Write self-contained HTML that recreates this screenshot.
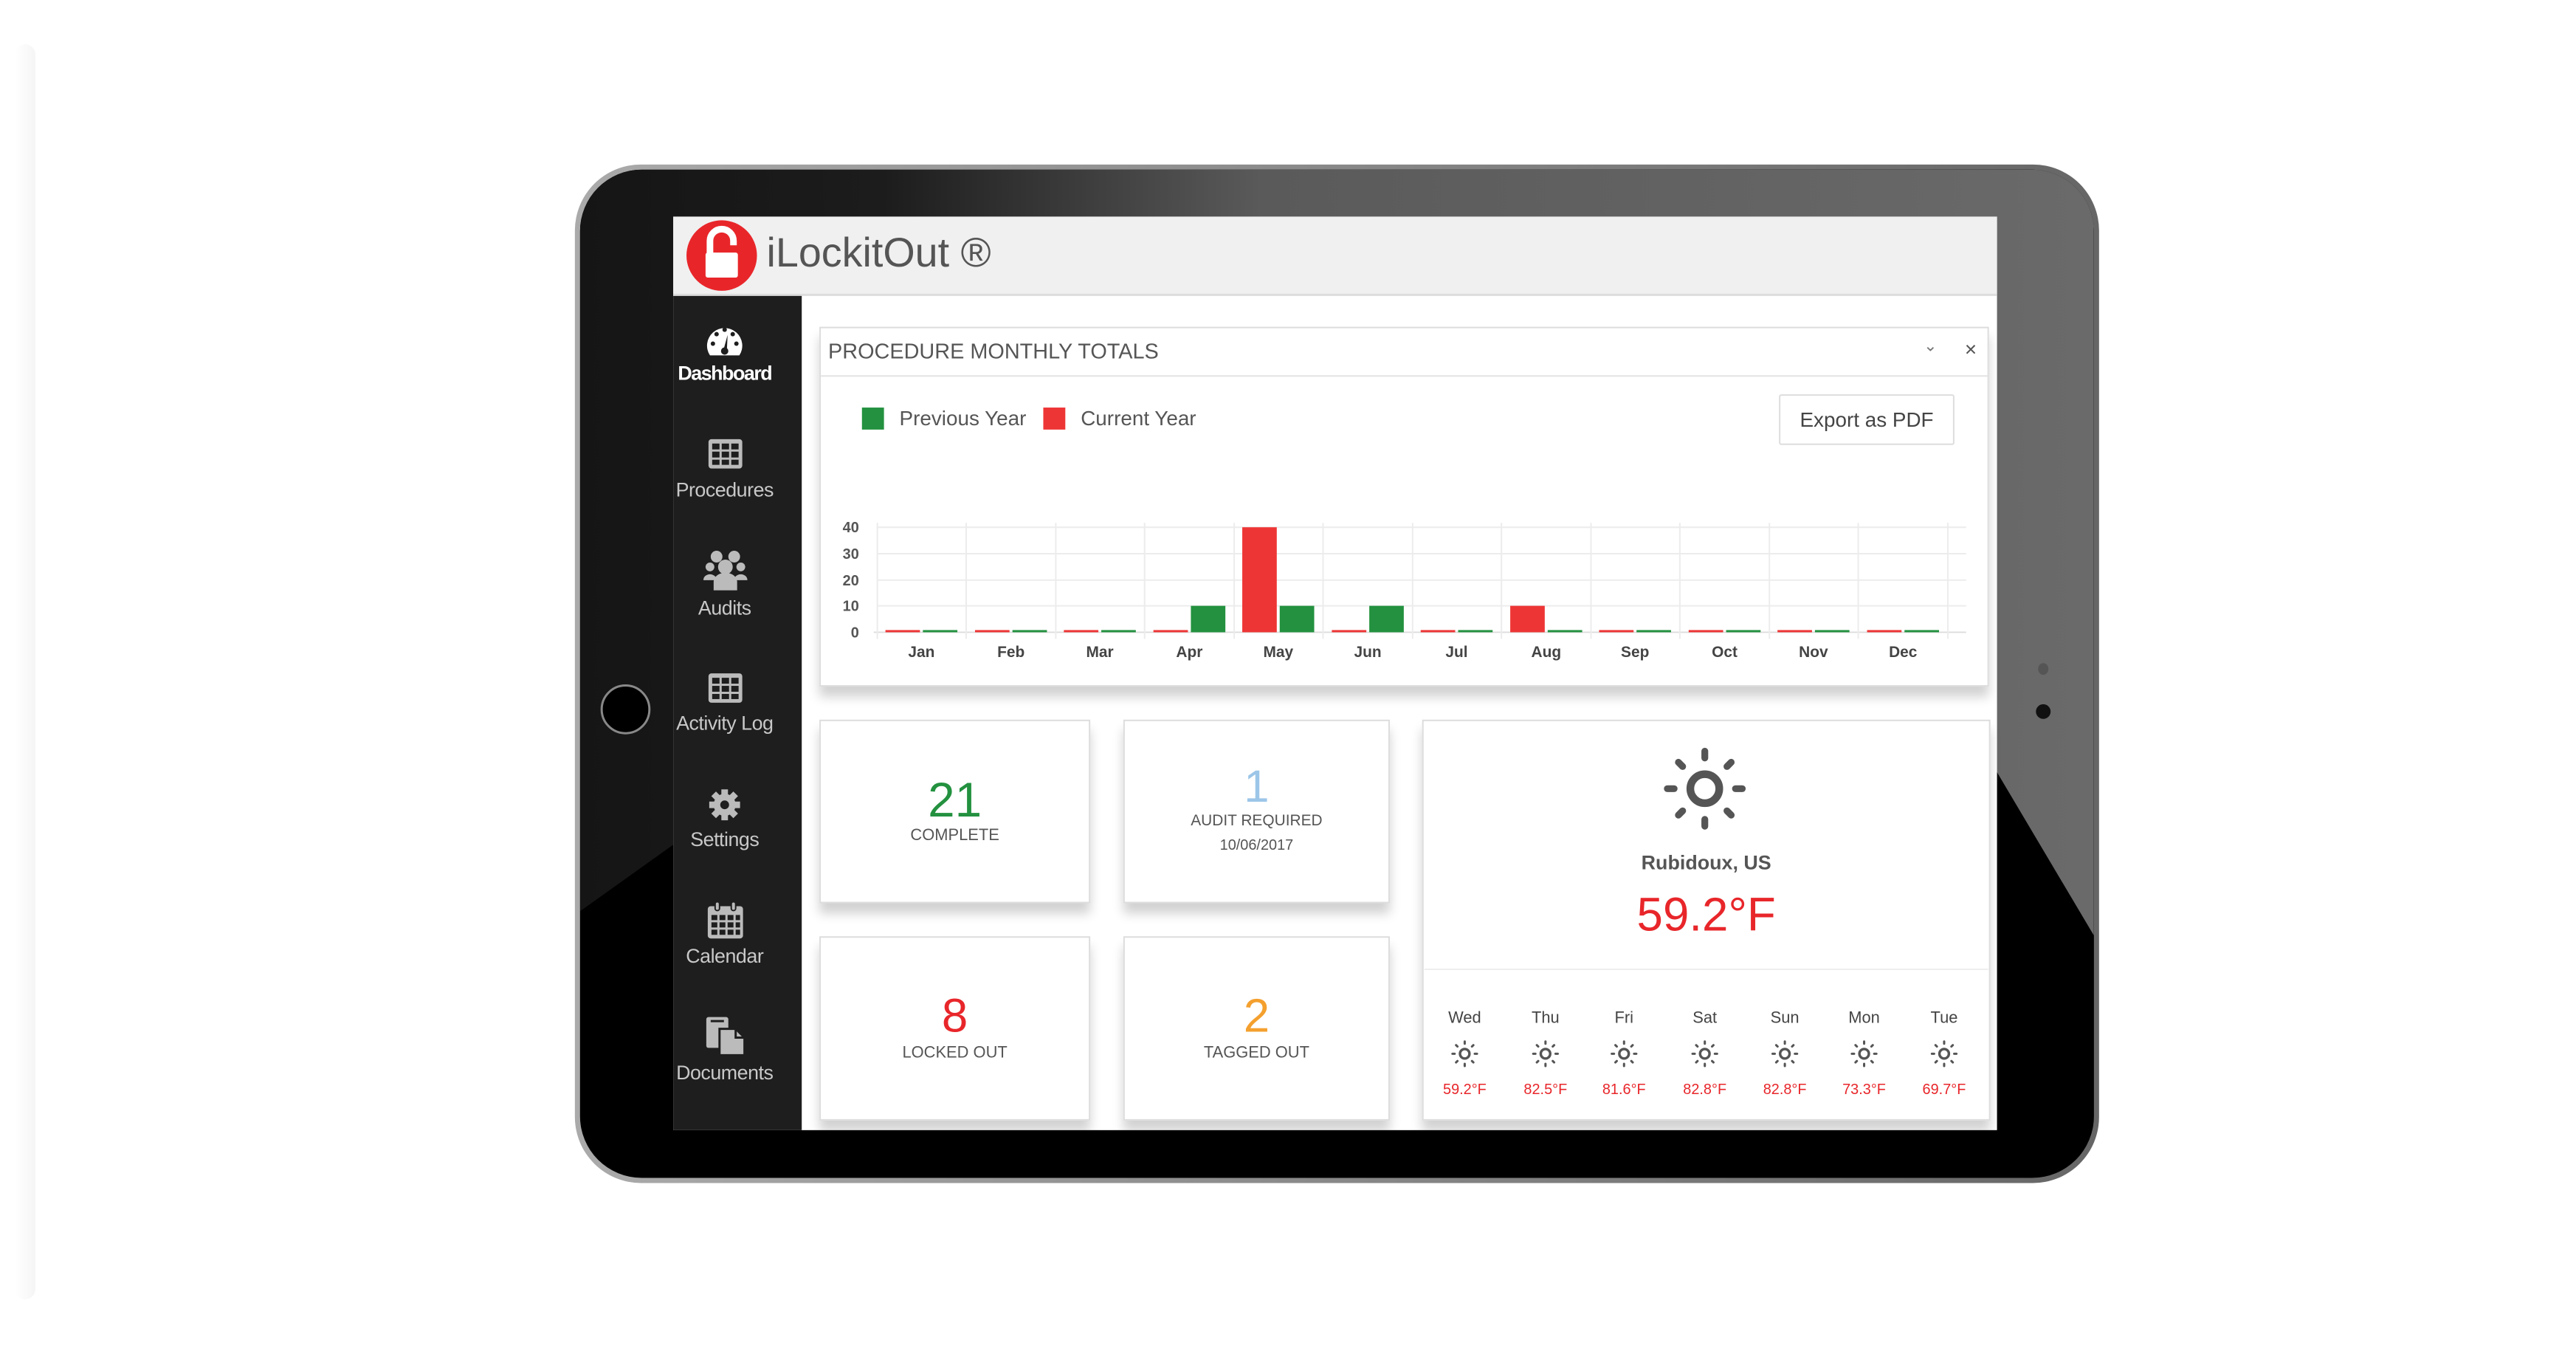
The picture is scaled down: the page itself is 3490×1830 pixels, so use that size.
<!DOCTYPE html>
<html><head><meta charset="utf-8"><style>
*{margin:0;padding:0;box-sizing:border-box}
body{width:3490px;height:1830px;background:#fff;position:relative;overflow:hidden;font-family:"Liberation Sans",sans-serif}
#w{position:absolute;left:0;top:0;width:3490px;height:1830px;transform:scale(0.9947);transform-origin:0 0}
.a{position:absolute}
.c{text-align:center}
.card{position:absolute;background:#fff;border:2px solid #ddd;box-shadow:0 14px 14px rgba(0,0,0,.18)}
.nav{position:absolute;left:912px;width:150px;text-align:center;color:#c8c8c8;font-size:27px;letter-spacing:-0.5px}
</style></head><body>
<div class="a" style="left:20px;top:60px;width:28px;height:1700px;background:linear-gradient(90deg,rgba(0,0,0,0),rgba(0,0,0,.04));border-radius:20px"></div>
<div id="w">
<div class="a" style="left:783px;top:224px;width:2076px;height:1387px;border-radius:90px;background:linear-gradient(90deg,#aaa,#666);padding:7px">
 <div style="position:relative;width:100%;height:100%;border-radius:84px;background:#000;overflow:hidden">
  <div class="a" style="left:0;top:0;width:2062px;height:1373px;clip-path:polygon(0 0,2062px 0,2062px 1043px,1929px 819px,126px 920px,0 1010px);background:linear-gradient(90deg,#151515 0%,#1c1c1c 20%,#5a5a5a 45%,#6a6a6a 100%)"></div>
 </div>
</div>
<div class="a" style="left:818px;top:932px;width:68px;height:68px;border-radius:50%;background:#000;border:3px solid #888"></div>
<div class="a" style="left:2773px;top:959px;width:20px;height:20px;border-radius:50%;background:#111"></div>
<div class="a" style="left:2776px;top:903px;width:14px;height:16px;border-radius:50%;background:#555"></div>
<div class="a" style="left:917px;top:295px;width:1803px;height:1244px;background:#fff"></div>
<div class="a" style="left:917px;top:295px;width:1803px;height:108px;background:#f0f0f0;border-bottom:3px solid #ddd"></div>
<svg class="a" style="left:933px;top:298px" width="100" height="100" viewBox="0 0 100 100">
 <circle cx="50" cy="50" r="48" fill="#e8262a"/>
 <path d="M34 48 V30 a16 16 0 0 1 32 0 V36" fill="none" stroke="#fff" stroke-width="9"/>
 <rect x="28" y="46" width="44" height="34" rx="3" fill="#fff"/>
</svg>
<div class="a" style="left:1044px;top:312px;font-size:56px;color:#555;line-height:64px">iLockitOut ®</div>
<div class="a" style="left:917px;top:403px;width:175px;height:1136px;background:#1e1e1e"></div>
<svg class="a" style="left:961px;top:440px" width="52" height="48" viewBox="0 0 52 48"><path d="M6 44 A24 24 0 1 1 46 44 Z" fill="#fff"/><circle cx="10" cy="28" r="3" fill="#1e1e1e"/><circle cx="15" cy="15" r="3" fill="#1e1e1e"/><circle cx="26" cy="9" r="3" fill="#1e1e1e"/><circle cx="37" cy="15" r="3" fill="#1e1e1e"/><circle cx="42" cy="28" r="3" fill="#1e1e1e"/><path d="M24 38 L30 16 L29 38Z" fill="#1e1e1e"/><circle cx="26" cy="38" r="5" fill="#1e1e1e"/></svg>
<div class="nav" style="top:493px;color:#fff;font-weight:bold;letter-spacing:-1.5px">Dashboard</div>
<svg class="a" style="left:963px;top:596px" width="50" height="44" viewBox="0 0 50 44"><rect x="2" y="2" width="46" height="40" rx="4" fill="#bbb"/><g fill="#1e1e1e"><rect x="7" y="8" width="10" height="8"/><rect x="20" y="8" width="10" height="8"/><rect x="33" y="8" width="10" height="8"/><rect x="7" y="19" width="10" height="8"/><rect x="20" y="19" width="10" height="8"/><rect x="33" y="19" width="10" height="8"/><rect x="7" y="30" width="10" height="7"/><rect x="20" y="30" width="10" height="7"/><rect x="33" y="30" width="10" height="7"/></g></svg>
<div class="nav" style="top:652px">Procedures</div>
<svg class="a" style="left:958px;top:748px" width="60" height="56" viewBox="0 0 60 56"><g fill="#bbb"><circle cx="18" cy="10" r="8"/><circle cx="42" cy="10" r="8"/><circle cx="9" cy="24" r="6"/><circle cx="51" cy="24" r="6"/><circle cx="30" cy="24" r="10"/><path d="M14 56 V44 a16 12 0 0 1 32 0 V56Z"/><path d="M0 42 a9 8 0 0 1 18 0Z"/><path d="M42 42 a9 8 0 0 1 18 0Z"/></g></svg>
<div class="nav" style="top:813px">Audits</div>
<svg class="a" style="left:963px;top:915px" width="50" height="44" viewBox="0 0 50 44"><rect x="2" y="2" width="46" height="40" rx="4" fill="#bbb"/><g fill="#1e1e1e"><rect x="7" y="8" width="10" height="8"/><rect x="20" y="8" width="10" height="8"/><rect x="33" y="8" width="10" height="8"/><rect x="7" y="19" width="10" height="8"/><rect x="20" y="19" width="10" height="8"/><rect x="33" y="19" width="10" height="8"/><rect x="7" y="30" width="10" height="7"/><rect x="20" y="30" width="10" height="7"/><rect x="33" y="30" width="10" height="7"/></g></svg>
<div class="nav" style="top:970px">Activity Log</div>
<svg class="a" style="left:963px;top:1072px" width="48" height="48" viewBox="0 0 48 48"><g fill="#bbb"><circle cx="24" cy="24" r="15"/><g stroke="#bbb" stroke-width="9"><path d="M24 3V45M3 24H45M9 9L39 39M39 9L9 39"/></g></g><circle cx="24" cy="24" r="6" fill="#1e1e1e"/></svg>
<div class="nav" style="top:1128px">Settings</div>
<svg class="a" style="left:962px;top:1226px" width="52" height="54" viewBox="0 0 52 54"><rect x="2" y="8" width="48" height="44" rx="4" fill="#bbb"/><rect x="12" y="2" width="6" height="12" rx="3" fill="#bbb" stroke="#1e1e1e" stroke-width="2"/><rect x="34" y="2" width="6" height="12" rx="3" fill="#bbb" stroke="#1e1e1e" stroke-width="2"/><g fill="#1e1e1e"><rect x="7" y="20" width="8" height="7"/><rect x="18" y="20" width="8" height="7"/><rect x="29" y="20" width="8" height="7"/><rect x="40" y="20" width="6" height="7"/><rect x="7" y="30" width="8" height="7"/><rect x="18" y="30" width="8" height="7"/><rect x="29" y="30" width="8" height="7"/><rect x="40" y="30" width="6" height="7"/><rect x="7" y="40" width="8" height="7"/><rect x="18" y="40" width="8" height="7"/><rect x="29" y="40" width="8" height="7"/><rect x="40" y="40" width="6" height="7"/></g></svg>
<div class="nav" style="top:1287px">Calendar</div>
<svg class="a" style="left:960px;top:1383px" width="56" height="56" viewBox="0 0 56 56"><rect x="2" y="2" width="30" height="42" rx="3" fill="#bbb"/><rect x="8" y="6" width="18" height="3" fill="#1e1e1e"/><path d="M20 18 H42 L54 30 V54 H20Z" fill="#bbb" stroke="#1e1e1e" stroke-width="3"/><path d="M42 18 V30 H54" fill="none" stroke="#1e1e1e" stroke-width="3"/></svg>
<div class="nav" style="top:1446px">Documents</div>
<div class="card" style="left:1116px;top:445px;width:1593px;height:490px"></div>
<div class="a" style="left:1118px;top:511px;width:1589px;height:2px;background:#e3e3e3"></div>
<div class="a" style="left:1128px;top:462px;font-size:29px;color:#555;line-height:34px">PROCEDURE MONTHLY TOTALS</div>
<div class="a" style="left:2620px;top:458px;font-size:22px;color:#777">&#8964;</div>
<div class="a" style="left:2676px;top:460px;font-size:28px;color:#555">×</div>
<div class="a" style="left:1174px;top:555px;width:30px;height:30px;background:#23913f"></div>
<div class="a" style="left:1225px;top:553px;font-size:28px;color:#555;line-height:34px">Previous Year</div>
<div class="a" style="left:1421px;top:555px;width:30px;height:30px;background:#ee3535"></div>
<div class="a" style="left:1472px;top:553px;font-size:28px;color:#555;line-height:34px">Current Year</div>
<div class="a c" style="left:2423px;top:537px;width:239px;height:69px;border:2px solid #ddd;border-radius:3px;font-size:28px;color:#444;line-height:65px">Export as PDF</div>
<svg class="a" style="left:0;top:0" width="3490" height="1830" font-family="Liberation Sans, sans-serif">
 <g stroke="#ececec" stroke-width="2">
  <line x1="1195" y1="718" x2="2678" y2="718"/><line x1="1195" y1="754" x2="2678" y2="754"/><line x1="1195" y1="790" x2="2678" y2="790"/><line x1="1195" y1="825" x2="2678" y2="825"/><line x1="1190" y1="861" x2="2678" y2="861" stroke="#ddd"/>
  <line x1="1195" y1="712" x2="1195" y2="870"/><line x1="1316" y1="712" x2="1316" y2="870"/><line x1="1438" y1="712" x2="1438" y2="870"/><line x1="1559" y1="712" x2="1559" y2="870"/><line x1="1681" y1="712" x2="1681" y2="870"/><line x1="1802" y1="712" x2="1802" y2="870"/><line x1="1924" y1="712" x2="1924" y2="870"/><line x1="2045" y1="712" x2="2045" y2="870"/><line x1="2167" y1="712" x2="2167" y2="870"/><line x1="2288" y1="712" x2="2288" y2="870"/><line x1="2410" y1="712" x2="2410" y2="870"/><line x1="2531" y1="712" x2="2531" y2="870"/><line x1="2653" y1="712" x2="2653" y2="870"/>
 </g>
 <g font-size="20" font-weight="bold" fill="#555" text-anchor="end">
  <text x="1170" y="725">40</text><text x="1170" y="761">30</text><text x="1170" y="797">20</text><text x="1170" y="832">10</text><text x="1170" y="868">0</text>
 </g>
 <g font-size="21" font-weight="bold" fill="#444" text-anchor="middle">
  <text x="1255" y="895">Jan</text><text x="1377" y="895">Feb</text><text x="1498" y="895">Mar</text><text x="1620" y="895">Apr</text><text x="1741" y="895">May</text><text x="1863" y="895">Jun</text><text x="1984" y="895">Jul</text><text x="2106" y="895">Aug</text><text x="2227" y="895">Sep</text><text x="2349" y="895">Oct</text><text x="2470" y="895">Nov</text><text x="2592" y="895">Dec</text>
 </g>
 <g fill="#ee3535">
  <rect x="1206" y="858" width="47" height="3"/><rect x="1328" y="858" width="47" height="3"/><rect x="1449" y="858" width="47" height="3"/><rect x="1571" y="858" width="47" height="3"/><rect x="1692" y="718" width="47" height="143"/><rect x="1814" y="858" width="47" height="3"/><rect x="1935" y="858" width="47" height="3"/><rect x="2057" y="825" width="47" height="36"/><rect x="2178" y="858" width="47" height="3"/><rect x="2300" y="858" width="47" height="3"/><rect x="2421" y="858" width="47" height="3"/><rect x="2543" y="858" width="47" height="3"/>
 </g>
 <g fill="#23913f">
  <rect x="1257" y="858" width="47" height="3"/><rect x="1379" y="858" width="47" height="3"/><rect x="1500" y="858" width="47" height="3"/><rect x="1622" y="825" width="47" height="36"/><rect x="1743" y="825" width="47" height="36"/><rect x="1865" y="825" width="47" height="36"/><rect x="1986" y="858" width="47" height="3"/><rect x="2108" y="858" width="47" height="3"/><rect x="2229" y="858" width="47" height="3"/><rect x="2351" y="858" width="47" height="3"/><rect x="2472" y="858" width="47" height="3"/><rect x="2594" y="858" width="47" height="3"/>
 </g>
</svg>
<div class="card" style="left:1116px;top:980px;width:369px;height:250px"></div>
<div class="a c" style="left:1116px;top:1055px;width:369px;font-size:66px;color:#23913f;line-height:68px">21</div>
<div class="a c" style="left:1116px;top:1124px;width:369px;font-size:22px;color:#555">COMPLETE</div>
<div class="card" style="left:1530px;top:980px;width:363px;height:250px"></div>
<div class="a c" style="left:1530px;top:1040px;width:363px;font-size:62px;color:#9cc6e8;line-height:64px">1</div>
<div class="a c" style="left:1530px;top:1106px;width:363px;font-size:21px;color:#555">AUDIT REQUIRED</div>
<div class="a c" style="left:1530px;top:1140px;width:363px;font-size:20px;color:#555">10/06/2017</div>
<div class="card" style="left:1116px;top:1275px;width:369px;height:251px"></div>
<div class="a c" style="left:1116px;top:1350px;width:369px;font-size:64px;color:#e8262a;line-height:66px">8</div>
<div class="a c" style="left:1116px;top:1420px;width:369px;font-size:22px;color:#555">LOCKED OUT</div>
<div class="card" style="left:1530px;top:1275px;width:363px;height:251px"></div>
<div class="a c" style="left:1530px;top:1350px;width:363px;font-size:64px;color:#f4a02e;line-height:66px">2</div>
<div class="a c" style="left:1530px;top:1420px;width:363px;font-size:22px;color:#555">TAGGED OUT</div>
<div class="card" style="left:1937px;top:980px;width:774px;height:546px"></div>
<svg width="0" height="0" style="position:absolute"><defs><symbol id="sun" viewBox="-50 -50 100 100"><circle r="17" fill="none" stroke="#555" stroke-width="9"/><g stroke="#555" stroke-width="8" stroke-linecap="round"><path d="M0-44V-36M0 36V44M-44 0H-36M36 0H44M-31-31L-26-26M26 26L31 31M31-31L26-26M-26 26L-31 31"/></g></symbol></defs></svg>
<svg class="a" style="left:2264px;top:1016px" width="116" height="116"><use href="#sun" width="116" height="116"/></svg>
<div class="a c" style="left:1937px;top:1160px;width:774px;font-size:27px;font-weight:bold;color:#555">Rubidoux, US</div>
<div class="a c" style="left:1937px;top:1210px;width:774px;font-size:64px;color:#e8262a;line-height:70px">59.2°F</div>
<div class="a" style="left:1940px;top:1319px;width:768px;height:2px;background:#eee"></div>
<div class="a" style="left:1937px;top:1373px;width:774px;font-size:22px;color:#444">
<span class="a c" style="left:18px;width:80px">Wed</span><span class="a c" style="left:128px;width:80px">Thu</span><span class="a c" style="left:235px;width:80px">Fri</span><span class="a c" style="left:345px;width:80px">Sat</span><span class="a c" style="left:454px;width:80px">Sun</span><span class="a c" style="left:562px;width:80px">Mon</span><span class="a c" style="left:671px;width:80px">Tue</span>
</div>
<svg class="a" style="left:1976px;top:1416px" width="700" height="40"><g>
<use href="#sun" x="0" y="0" width="38" height="38"/><use href="#sun" x="110" y="0" width="38" height="38"/><use href="#sun" x="217" y="0" width="38" height="38"/><use href="#sun" x="327" y="0" width="38" height="38"/><use href="#sun" x="436" y="0" width="38" height="38"/><use href="#sun" x="544" y="0" width="38" height="38"/><use href="#sun" x="653" y="0" width="38" height="38"/></g></svg>
<div class="a" style="left:1937px;top:1473px;width:774px;font-size:20px;color:#e8262a">
<span class="a c" style="left:8px;width:100px">59.2°F</span><span class="a c" style="left:118px;width:100px">82.5°F</span><span class="a c" style="left:225px;width:100px">81.6°F</span><span class="a c" style="left:335px;width:100px">82.8°F</span><span class="a c" style="left:444px;width:100px">82.8°F</span><span class="a c" style="left:552px;width:100px">73.3°F</span><span class="a c" style="left:661px;width:100px">69.7°F</span>
</div>
</div>
</body></html>
